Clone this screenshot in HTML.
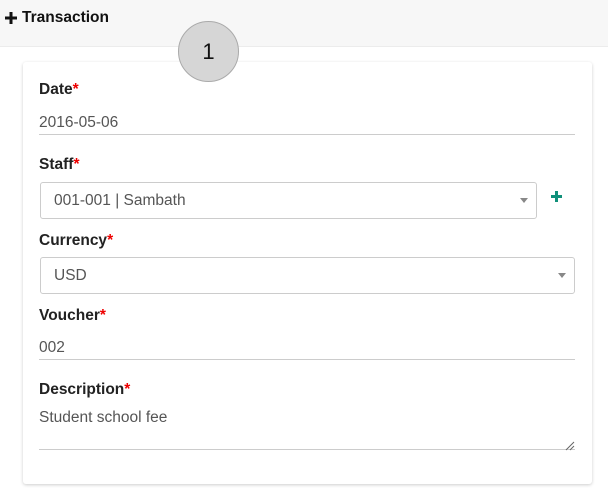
<!DOCTYPE html>
<html><head><meta charset="utf-8"><style>
body{margin:0;width:608px;height:495px;background:#fff;font-family:"Liberation Sans",sans-serif;position:relative;overflow:hidden}
.hdr{position:absolute;left:0;top:0;width:608px;height:46px;background:#f7f7f7;border-bottom:1px solid #ececec}
.hdr span{position:absolute;left:22px;top:9px;font-size:15.5px;font-weight:bold;color:#111}
.card{position:absolute;left:23px;top:62px;width:569px;height:422px;background:#fff;border-radius:3px;box-shadow:0 1px 3px rgba(0,0,0,.2)}
.circ{position:absolute;left:178px;top:21px;width:61px;height:61px;border-radius:50%;background:#d6d6d6;border:1px solid #aaa;box-sizing:border-box;text-align:center;line-height:59px;font-size:22px;color:#111}
.a{position:absolute}
.lbl{font-size:15.5px;font-weight:bold;color:#222}
.lbl b{color:#e00;font-weight:bold}
.val{font-size:15.5px;color:#555}
.line{position:absolute;left:39px;width:536px;height:1px;background:#ccc}
.sel{position:absolute;left:40px;border:1px solid #ccc;border-radius:3px;box-sizing:border-box;font-size:15.5px;color:#555;padding-left:13px}
.arr{position:absolute;right:8px;top:15px;width:0;height:0;border-left:4px solid transparent;border-right:4px solid transparent;border-top:5px solid #888}
</style></head><body>
<div class="hdr"><svg class="a" style="left:5px;top:12px" width="12" height="12"><path d="M6 0V12M0 6H12" stroke="#111" stroke-width="3"/></svg><span>Transaction</span></div>
<div class="card"></div>
<div class="circ">1</div>
<div class="a lbl" style="left:39px;top:81px">Date<b>*</b></div>
<div class="a val" style="left:39px;top:114px">2016-05-06</div>
<div class="line" style="top:134px"></div>
<div class="a lbl" style="left:39px;top:156px">Staff<b>*</b></div>
<div class="sel" style="top:182px;width:497px;height:37px;line-height:35px">001-001 | Sambath<div class="arr"></div></div>
<svg class="a" style="left:551px;top:191px" width="11" height="11"><path d="M5.5 0V11M0 5.5H11" stroke="#10907a" stroke-width="3"/></svg>
<div class="a lbl" style="left:39px;top:232px">Currency<b>*</b></div>
<div class="sel" style="top:257px;width:535px;height:37px;line-height:35px">USD<div class="arr"></div></div>
<div class="a lbl" style="left:39px;top:307px">Voucher<b>*</b></div>
<div class="a val" style="left:39px;top:339px">002</div>
<div class="line" style="top:359px"></div>
<div class="a lbl" style="left:39px;top:381px">Description<b>*</b></div>
<div class="a val" style="left:39px;top:409px">Student school fee</div>
<div class="line" style="top:449px"></div>
<svg class="a" style="left:565px;top:441px" width="10" height="10"><path d="M1 9L9 1M5 9L9 5" stroke="#666" stroke-width="1"/></svg>
</body></html>
